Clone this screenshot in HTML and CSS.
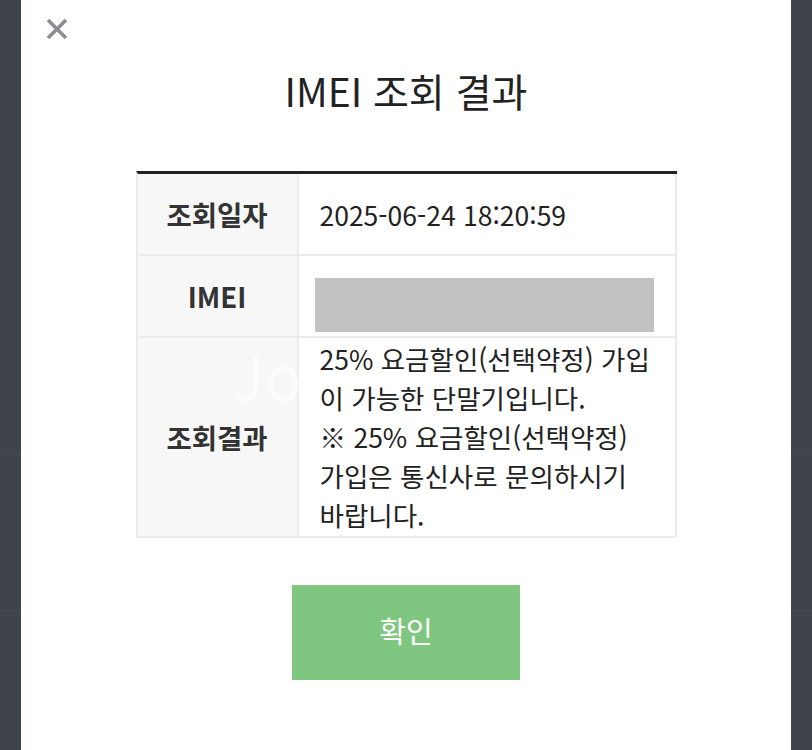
FILE: index.html
```html
<!DOCTYPE html>
<html lang="ko">
<head>
<meta charset="utf-8">
<title>IMEI 조회 결과</title>
<link rel="stylesheet" href="styles.css">
</head>
<body>
<div class="modal">
  <button class="close" aria-label="닫기">
    <svg viewBox="0 0 22 22" width="22" height="22"><path d="M2 2 L20 20 M20 2 L2 20" stroke="#8d8d91" stroke-width="3.6" stroke-linecap="butt" fill="none"/></svg>
  </button>
  <h1 class="title">IMEI 조회 결과</h1>
  <div class="info">
    <div class="label">조회일자</div>
    <div class="value">2025-06-24 18:20:59</div>
    <div class="label">IMEI</div>
    <div class="value value-imei"><span class="masked"></span></div>
    <div class="label">조회결과</div>
    <div class="value value-result">25% 요금할인(선택약정) 가입이 가능한 단말기입니다.<br>※ 25% 요금할인(선택약정) 가입은 통신사로 문의하시기 바랍니다.</div>
    <span class="watermark">Jo</span>
  </div>
  <div class="actions">
    <button class="confirm">확인</button>
  </div>
</div>
</body>
</html>
```
FILE: styles.css
```css
html, body {
  margin: 0;
  padding: 0;
}
body {
  background-color: #3f434b;
  background-image:
    linear-gradient(to bottom, transparent 455px, #464a52 455px, #464a52 456px, transparent 456px),
    linear-gradient(to bottom, transparent 610px, #464a52 610px, #464a52 611px, transparent 611px);
  min-height: 750px;
  font-family: "Noto Sans CJK KR", "Noto Sans", sans-serif;
  color: #222;
}
.modal {
  width: 770px;
  min-height: 750px;
  margin: 0 auto;
  background: #fff;
  padding-top: 18px;
  box-sizing: border-box;
}
.close {
  display: block;
  margin-left: 25px;
  width: 22px;
  height: 22px;
  padding: 0;
  border: 0;
  background: none;
}
.close svg {
  display: block;
}
.title {
  margin: 23px 0 0;
  font-size: 39px;
  line-height: 54px;
  font-weight: 400;
  text-align: center;
  color: #222;
}
.info {
  position: relative;
  width: 541px;
  margin: 54px auto 0;
  box-sizing: border-box;
  border-top: 3px solid #222;
  border-left: 2px solid #ebebeb;
  display: grid;
  grid-template-columns: 161px 378px;
}
.label, .value {
  border-right: 2px solid #ebebeb;
  border-bottom: 2px solid #ebebeb;
  box-sizing: border-box;
  display: flex;
  align-items: center;
}
.label {
  background: #f7f7f7;
  justify-content: center;
  font-size: 27.5px;
  font-weight: 700;
  color: #333;
  min-height: 82px;
}
.value {
  position: relative;
  z-index: 1;
  padding: 0 19px 0 21px;
  font-size: 26.5px;
  color: #222;
}
.value-imei {
  padding: 21px 21px 4px 16px;
}
.masked {
  display: block;
  width: 100%;
  height: 54px;
  background: #c2c2c2;
}
.watermark {
  position: absolute;
  z-index: 0;
  left: 94px;
  top: 160px;
  font-size: 62px;
  line-height: 80px;
  font-weight: 400;
  color: rgba(255, 255, 255, 0.5);
  pointer-events: none;
}
.value-result {
  display: block;
  padding-top: 1px;
  padding-bottom: 2px;
  line-height: 39px;
}
.actions {
  display: flex;
  justify-content: center;
  margin-top: 47px;
}
.confirm {
  width: 228px;
  height: 95px;
  border: 0;
  background: #7fc780;
  color: #fff;
  font-family: "Noto Sans CJK KR", "Noto Sans", sans-serif;
  font-size: 29px;
  padding: 0 0 6px;
}
```
